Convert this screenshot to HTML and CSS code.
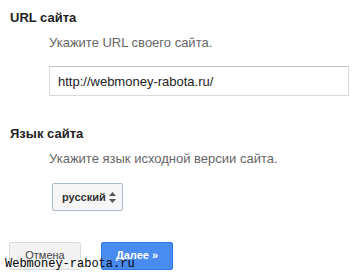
FILE: index.html
```html
<!DOCTYPE html>
<html lang="ru">
<head>
  <meta charset="UTF-8">
  <title>Сайт</title>
  <link rel="stylesheet" href="styles.css">
</head>
<body>
  <form class="site-form">
    <div class="field">
      <h3 class="field-title">URL сайта</h3>
      <p class="field-hint">Укажите URL своего сайта.</p>
      <input class="text-input" type="text" value="http://webmoney-rabota.ru/">
    </div>

    <div class="field">
      <h3 class="field-title">Язык сайта</h3>
      <p class="field-hint">Укажите язык исходной версии сайта.</p>
      <div class="select">
        <span class="select-value">русский</span>
        <svg class="select-arrows" width="7" height="11" viewBox="0 0 7 11">
          <path d="M3.5 0 L7 4 L0 4 Z M0 7 L7 7 L3.5 11 Z" fill="#555"/>
        </svg>
      </div>
    </div>

    <div class="actions">
      <button type="button" class="btn btn-cancel">Отмена</button>
      <button type="submit" class="btn btn-next">Далее »</button>
    </div>
  </form>
  <div class="watermark">Webmoney-rabota.ru</div>
</body>
</html>
```

FILE: styles.css
```css
body {
  margin: 0;
  font-family: Arial, "Liberation Sans", sans-serif;
  background: #fff;
  color: #222;
  position: relative;
  height: 276px;
  overflow: hidden;
}
.site-form {
  padding: 10px 4px 0 10px;
}
.field {
  margin-bottom: 30px;
}
.field-title {
  margin: 0;
  font-size: 13px;
  font-weight: bold;
  line-height: 16px;
  color: #222;
}
.field-hint {
  margin: 9px 0 0 39px;
  font-size: 13px;
  line-height: 16px;
  color: #666;
}
.text-input {
  display: block;
  box-sizing: border-box;
  width: 300px;
  height: 30px;
  margin: 15px 0 0 39px;
  padding: 0 8px;
  border: 1px solid #d9d9d9;
  border-top-color: #c0c0c0;
  font-family: inherit;
  font-size: 13px;
  color: #222;
}
.select {
  display: flex;
  align-items: center;
  justify-content: space-between;
  box-sizing: border-box;
  width: 71px;
  height: 28px;
  margin: 16px 0 0 42px;
  padding: 0 6px 0 9px;
  border: 1px solid #a9b8cc;
  border-radius: 2px;
  background: #f6f6f6;
  font-size: 11px;
  font-weight: bold;
  color: #333;
}
.actions {
  display: flex;
  gap: 20px;
  margin-top: 31px;
}
.btn {
  box-sizing: border-box;
  width: 72px;
  height: 28px;
  padding: 0 0 3px;
  border-radius: 2px;
  font-family: inherit;
  font-size: 11px;
  cursor: pointer;
}
.btn-cancel {
  margin-left: -1px;
  border: 1px solid #dcdcdc;
  background: #f3f3f3;
  color: #444;
}
.btn-next {
  border: 1px solid #3079ed;
  background: #4a8bf0;
  color: #fff;
  font-weight: bold;
}
.watermark {
  position: absolute;
  left: 5px;
  top: 257px;
  font-family: "Liberation Mono", monospace;
  font-size: 12px;
  color: #000;
}
```
